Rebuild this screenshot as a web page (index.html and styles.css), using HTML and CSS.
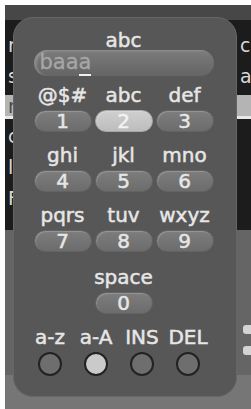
FILE: index.html
```html
<!DOCTYPE HTML>
<html lang="en">
  <head>
    <title>Text entry</title>
    <meta charset="utf-8" />
    <link rel="stylesheet" href="styles.css">
  </head>
  <body>
    <div class='screen'>
      <div class='topbar'></div>
      <div class='list'>
        <div class='row'><span>rec</span><span>c</span></div>
        <div class='row'><span>set</span><span>a</span></div>
        <div class='row selected'><span>name</span><span></span></div>
        <div class='row'><span>ch</span><span></span></div>
        <div class='row'><span>lock</span><span></span></div>
        <div class='row'><span>F</span><span></span></div>
      </div>
      <div class='lower'>
        <div class='tab'></div>
        <div class='tab'></div>
      </div>
      <div class='floor'></div>

      <div class='panel'>
        <div class='title'>abc</div>
        <div class='field'>baa<span class='cursor'>a</span></div>
        <div class='keys'>
          <div class='key'><div class='label'>@$#</div><div class='pill'>1</div></div>
          <div class='key'><div class='label'>abc</div><div class='pill active'>2</div></div>
          <div class='key'><div class='label'>def</div><div class='pill'>3</div></div>
          <div class='key'><div class='label'>ghi</div><div class='pill'>4</div></div>
          <div class='key'><div class='label'>jkl</div><div class='pill'>5</div></div>
          <div class='key'><div class='label'>mno</div><div class='pill'>6</div></div>
          <div class='key'><div class='label'>pqrs</div><div class='pill'>7</div></div>
          <div class='key'><div class='label'>tuv</div><div class='pill'>8</div></div>
          <div class='key'><div class='label'>wxyz</div><div class='pill'>9</div></div>
          <div class='key space'><div class='label'>space</div><div class='pill'>0</div></div>
        </div>
        <div class='modes'>
          <div class='mode'><div class='label'>a-z</div><div class='dot'></div></div>
          <div class='mode'><div class='label'>a-A</div><div class='dot on'></div></div>
          <div class='mode'><div class='label'>INS</div><div class='dot'></div></div>
          <div class='mode'><div class='label'>DEL</div><div class='dot'></div></div>
        </div>
      </div>
    </div>
  </body>
</html>
```
FILE: styles.css
```css
body {
  margin: 0;
  padding: 5px 0 0 5px;
  background-color: #ffffff;
  font-family: "DejaVu Sans", sans-serif;
  overflow: hidden;
}

.screen {
  position: relative;
  display: flex;
  flex-direction: column;
  width: 246px;
  height: 404px;
  background-color: #1c1c1c;
}

.topbar {
  height: 15px;
  background-color: #474747;
}

.list {
  display: flex;
  flex-direction: column;
  height: 210px;
  padding-top: 14px;
  box-sizing: border-box;
  color: #d8d8d8;
  font-size: 19px;
}

.row {
  display: flex;
  justify-content: space-between;
  height: 31px;
  line-height: 22px;
  padding: 0 0 0 3px;
}

.row span:last-child {
  width: 11px;
}

.row.selected {
  height: 24px;
  margin: -1px 0 6px;
  background-color: #b4b4b4;
  color: #4a4a4a;
  border-bottom: 3px solid #e8e8e8;
  box-sizing: border-box;
}

.lower {
  display: flex;
  flex-direction: column;
  align-items: flex-end;
  height: 145px;
  padding-top: 95px;
  box-sizing: border-box;
  background-color: #656565;
}

.tab {
  width: 8px;
  height: 9px;
  margin-bottom: 12px;
  border-radius: 3px 0 0 3px;
  background-color: #d4d4d4;
}

.floor {
  flex: 1;
  background-color: #767676;
}

/* keypad popup */
.panel {
  position: absolute;
  left: 8px;
  top: 12px;
  width: 224px;
  height: 380px;
  box-sizing: border-box;
  display: flex;
  flex-direction: column;
  align-items: center;
  padding: 12px 3px 0 0;
  border: 1px solid #666666;
  border-radius: 20px;
  background-color: #575757;
  color: #e6e6e6;
  font-size: 20px;
  line-height: 20px;
  -webkit-text-stroke: 0.5px #e6e6e6;
}

.field {
  width: 180px;
  height: 26px;
  box-sizing: border-box;
  padding-left: 6px;
  border-radius: 13px;
  background: linear-gradient(#7c7c7c, #646464);
  box-shadow: inset 3px 1px 2px rgba(255, 255, 255, 0.18);
  color: #a6a6a6;
  font-size: 21px;
  line-height: 25px;
  -webkit-text-stroke: 0.3px #a6a6a6;
}

.cursor {
  border-bottom: 2px solid #f0f0f0;
}

.keys {
  display: grid;
  grid-template-columns: repeat(3, 58px);
  column-gap: 3px;
  row-gap: 14px;
  margin-top: 10px;
}

.key,
.mode {
  display: flex;
  flex-direction: column;
  align-items: center;
}

.key .label,
.mode .label {
  line-height: 18px;
}

.key.space {
  grid-column: 2;
  margin-top: 2px;
}

.pill {
  width: 100%;
  height: 22px;
  margin-top: 6px;
  box-sizing: border-box;
  border: 1px solid #636363;
  border-radius: 11px;
  background: linear-gradient(#7d7d7d, #6c6c6c);
  box-shadow: inset 1px 1px 1px rgba(255, 255, 255, 0.2);
  text-align: center;
  line-height: 20px;
}

.pill.active {
  border-color: #a8a8a8;
  background: linear-gradient(#cfcfcf, #bdbdbd);
  color: #f2f2f2;
  -webkit-text-stroke-color: #f2f2f2;
}

.modes {
  display: grid;
  grid-template-columns: repeat(4, 46px);
  margin: 14px 9px 0 0;
}

.dot {
  width: 24px;
  height: 24px;
  margin-top: 6px;
  box-sizing: border-box;
  border: 2px solid #222222;
  border-radius: 50%;
  background-color: #6e6e6e;
}

.dot.on {
  background-color: #cacaca;
}
```
